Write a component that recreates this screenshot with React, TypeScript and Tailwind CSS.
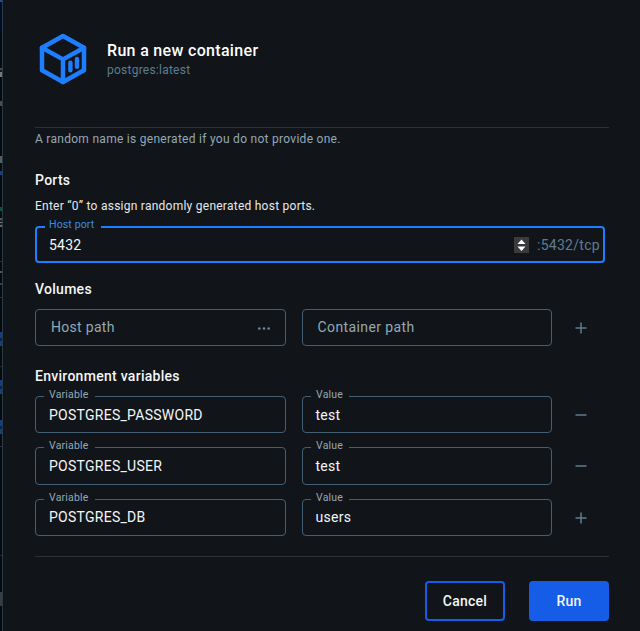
import React from "react";

const BACKDROP: { h: string; c: string }[] = [
  { h: "h-[2px]", c: "bg-[#1d4f8f]" },
  { h: "h-[28px]", c: "bg-[#000c24]" },
  { h: "h-[38px]", c: "bg-[#08090b]" },
  { h: "h-[2px]", c: "bg-[#45484a]" },
  { h: "h-[2px]", c: "bg-[#151719]" },
  { h: "h-[5px]", c: "bg-[#77797b]" },
  { h: "h-[24px]", c: "bg-[#08090b]" },
  { h: "h-[5px]", c: "bg-[#4a4c4e]" },
  { h: "h-[50px]", c: "bg-[#08090b]" },
  { h: "h-[7px]", c: "bg-[#5a5c5e]" },
  { h: "h-[8px]", c: "bg-[#08090b]" },
  { h: "h-[4px]", c: "bg-[#123f8f]" },
  { h: "h-[32px]", c: "bg-[#08090b]" },
  { h: "h-[4px]", c: "bg-[#04563f]" },
  { h: "h-[7px]", c: "bg-[#08090b]" },
  { h: "h-[2px]", c: "bg-[#55585a]" },
  { h: "h-[2px]", c: "bg-[#1b1d1f]" },
  { h: "h-[1px]", c: "bg-[#77797b]" },
  { h: "h-[2px]", c: "bg-[#1b1d1f]" },
  { h: "h-[2px]", c: "bg-[#66686a]" },
  { h: "h-[34px]", c: "bg-[#08090b]" },
  { h: "h-[1px]", c: "bg-[#2b3136]" },
  { h: "h-[9px]", c: "bg-[#08090b]" },
  { h: "h-[2px]", c: "bg-[#55585a]" },
  { h: "h-[10px]", c: "bg-[#08090b]" },
  { h: "h-[2px]", c: "bg-[#3b3e40]" },
  { h: "h-[12px]", c: "bg-[#08090b]" },
  { h: "h-[1px]", c: "bg-[#2b3136]" },
  { h: "h-[34px]", c: "bg-[#08090b]" },
  { h: "h-[6px]", c: "bg-[#123f82]" },
  { h: "h-[3px]", c: "bg-[#0a2148]" },
  { h: "h-[5px]", c: "bg-[#123f82]" },
  { h: "h-[20px]", c: "bg-[#08090b]" },
  { h: "h-[1px]", c: "bg-[#24292d]" },
  { h: "h-[13px]", c: "bg-[#08090b]" },
  { h: "h-[6px]", c: "bg-[#123f82]" },
  { h: "h-[3px]", c: "bg-[#0a2148]" },
  { h: "h-[5px]", c: "bg-[#123f82]" },
  { h: "h-[26px]", c: "bg-[#08090b]" },
  { h: "h-[6px]", c: "bg-[#123f82]" },
  { h: "h-[3px]", c: "bg-[#0a2148]" },
  { h: "h-[5px]", c: "bg-[#123f82]" },
  { h: "h-[12px]", c: "bg-[#08090b]" },
  { h: "h-[1px]", c: "bg-[#2b3136]" },
  { h: "h-[108px]", c: "bg-[#08090b]" },
  { h: "h-[1px]", c: "bg-[#24292d]" },
  { h: "h-[36px]", c: "bg-[#08090b]" },
  { h: "h-[14px]", c: "bg-[#3a3c3e]" },
  { h: "grow", c: "bg-[#08090b]" },
];

function ContainerIcon() {
  return (
    <svg width="48" height="52" viewBox="0 0 48 52" fill="none" stroke="#1d7eff" strokeWidth="4.5" strokeLinejoin="round" strokeLinecap="round">
      <path d="M24 3 45 14.8V37.2L24 49 3 37.2V14.8Z" />
      <path d="M3 14.8 24 26.4 45 14.8M24 26.4V49" />
      <path d="M31.4 29.8V37.2M38 26V33.8" strokeWidth="4.4" />
    </svg>
  );
}

function Heading({ children, className }: { children: React.ReactNode; className: string }) {
  return <h2 className={`text-[14px] leading-[20px] font-medium tracking-[0.28px] text-[#f4f6f7] ${className}`}>{children}</h2>;
}

function Field({ label, value, className }: { label: string; value: string; className: string }) {
  return (
    <div className={`relative flex items-center rounded-[4px] border border-[#435f74] ${className}`}>
      <span className="absolute -top-[9px] left-[8px] bg-[#111519] pr-[6px] pl-[5px] text-[10.5px] leading-[13px] tracking-[0.2px] text-[#94a8b6]">
        {label}
      </span>
      <span className="text-[14px] leading-[20px] tracking-[0.27px] text-[#f4f6f7]">{value}</span>
    </div>
  );
}

function Sign({ plus }: { plus?: boolean }) {
  return (
    <button className="ml-[23px] flex h-3 w-3 items-center justify-center" aria-label={plus ? "Add" : "Remove"}>
      <svg width="12" height="12" viewBox="0 0 12 12" stroke="#5f7c90" strokeWidth="1.5">
        <path d="M.5 6h11" />
        {plus && <path d="M6 .5v11" />}
      </svg>
    </button>
  );
}

function EnvRow({ name, value, height, plus }: { name: string; value: string; height: string; plus?: boolean }) {
  return (
    <div className="flex items-center">
      <Field label="Variable" value={name} className={`w-[251px] pl-[13px] ${height}`} />
      <Field label="Value" value={value} className={`ml-4 w-[250px] pl-[12.5px] ${height}`} />
      <Sign plus={plus} />
    </div>
  );
}

export default function App() {
  return (
    <div className="flex h-[631px] w-[640px] overflow-hidden bg-[#111519] font-['Roboto','Liberation_Sans',sans-serif]">
      <div className="flex w-[2px] shrink-0 flex-col">
        {BACKDROP.map((s, i) => (
          <div key={i} className={`w-full shrink-0 ${s.h} ${s.c}`} />
        ))}
      </div>
      <main className="flex grow flex-col border-l border-[#263c4b] pr-[31px] pl-[32px]">
        <header className="flex h-[127px] pt-[33px] pl-1">
          <ContainerIcon />
          <div className="ml-5 pt-[6px]">
            <h1 className="text-[16px] leading-[24px] font-medium tracking-[0.32px] text-white">Run a new container</h1>
            <p className="text-[12px] leading-[15px] tracking-[0.24px] text-[#5f7c90]">postgres:latest</p>
          </div>
        </header>
        <div className="h-px shrink-0 bg-[#2c3135]" />
        <p className="mt-[3px] text-[12px] leading-[16px] tracking-[0.28px] text-[#94a8b6]">
          A random name is generated if you do not provide one.
        </p>

        <Heading className="mt-[23px]">Ports</Heading>
        <p className="mt-[8px] text-[12px] leading-[16px] tracking-[0.25px] text-[#e6e9eb]">
          Enter “0” to assign randomly generated host ports.
        </p>
        <div className="relative mt-[12px] flex h-[37px] w-[570px] shrink-0 items-center rounded-[4px] border-2 border-[#1d7eff] pr-[3px] pl-[12px]">
          <span className="absolute -top-[10px] left-[8px] bg-[#111519] pr-[7px] pl-[4px] text-[10.5px] leading-[13px] tracking-[0.15px] text-[#3c8ce0]">
            Host port
          </span>
          <span className="grow text-[14px] leading-[20px] tracking-[0.2px] text-[#f4f6f7]">5432</span>
          <svg width="15" height="16" viewBox="0 0 15 16">
            <path d="M0 0h15v16H0z" fill="#3b3b3b" />
            <path d="M7.5 2.5 11.5 7h-8zM7.5 14 3.5 9.5h8z" fill="#fff" />
          </svg>
          <span className="ml-2 text-[14px] leading-[20px] tracking-[0.29px] text-[#5f7c90]">:5432/tcp</span>
        </div>

        <Heading className="mt-[16px]">Volumes</Heading>
        <div className="mt-[10px] flex items-center">
          <div className="flex h-[37px] w-[251px] items-center justify-between rounded-[4px] border border-[#435f74] pr-[14px] pl-[15px]">
            <span className="pb-[2px] text-[14px] leading-[20px] tracking-[0.3px] text-[#94a8b6]">Host path</span>
            <svg width="14" height="4" viewBox="0 0 14 4" fill="#66869c">
              <circle cx="2.3" cy="2.5" r="1.35" />
              <circle cx="7" cy="2.5" r="1.35" />
              <circle cx="11.7" cy="2.5" r="1.35" />
            </svg>
          </div>
          <div className="ml-4 flex h-[37px] w-[250px] items-center rounded-[4px] border border-[#435f74] pl-[14.5px]">
            <span className="pb-[2px] text-[14px] leading-[20px] tracking-[0.4px] text-[#94a8b6]">Container path</span>
          </div>
          <Sign plus />
        </div>

        <Heading className="mt-[20px]">Environment variables</Heading>
        <div className="mt-[10px] flex flex-col gap-[14px]">
          <EnvRow name="POSTGRES_PASSWORD" value="test" height="h-[37px]" />
          <EnvRow name="POSTGRES_USER" value="test" height="h-[38px]" />
          <EnvRow name="POSTGRES_DB" value="users" height="h-[37px] pb-px" plus />
        </div>

        <div className="mt-[20px] h-px shrink-0 bg-[#2c3135]" />
        <footer className="mt-[24px] flex justify-end gap-6">
          <button className="h-10 w-20 rounded-[4px] border-2 border-[#155de6] text-[14px] font-medium tracking-[0.25px] text-[#f4f6f7]">Cancel</button>
          <button className="h-10 w-20 rounded-[4px] bg-[#155de6] text-[14px] font-medium tracking-[0.25px] text-[#f4f6f7]">Run</button>
        </footer>
      </main>
    </div>
  );
}
